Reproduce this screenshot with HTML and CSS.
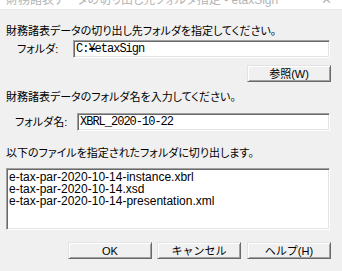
FILE: index.html
```html
<!DOCTYPE html>
<html lang="ja">
<head>
	<meta charset="UTF-8">
	<title>財務諸表データの切り出し</title>
	<link rel="stylesheet" href="styles.css">
</head>
<body>
	<div class="titlebar">
		<span class="title">財務諸表データの切り出し先フォルダ指定 - etaxSign</span>
		<span class="close">✕</span>
	</div>
	<div class="dialog">
		<p class="msg msg1">財務諸表データの切り出し先フォルダを指定してください。</p>
		<div class="row row1">
			<label class="lbl lbl1">フォルダ:</label>
			<div class="edit">C:¥etaxSign</div>
		</div>
		<div class="browse">
			<button class="btn">参照(W)</button>
		</div>
		<p class="msg msg2">財務諸表データのフォルダ名を入力してください。</p>
		<div class="row row2">
			<label class="lbl lbl2">フォルダ名:</label>
			<div class="edit">XBRL_2020-10-22</div>
		</div>
		<p class="msg msg3">以下のファイルを指定されたフォルダに切り出します。</p>
		<ul class="list">
			<li>e-tax-par-2020-10-14-instance.xbrl</li>
			<li>e-tax-par-2020-10-14.xsd</li>
			<li>e-tax-par-2020-10-14-presentation.xml</li>
		</ul>
		<div class="buttons">
			<button class="btn">OK</button>
			<button class="btn">キャンセル</button>
			<button class="btn btn-help">ヘルプ(H)</button>
		</div>
	</div>
</body>
</html>
```
FILE: styles.css
```css
* {
	margin: 0;
	padding: 0;
	list-style: none;
	box-sizing: border-box;
}
body {
	width: 342px;
	height: 271px;
	overflow: hidden;
	background: #f0f0f0;
	color: #000;
	font-family: "Liberation Sans", "Noto Sans CJK JP", sans-serif;
	font-size: 11px;
	font-feature-settings: "palt";
}
/* 上の切れたタイトルバー */
.titlebar {
	height: 10px;
	background: #fff;
	border-bottom: 1px solid #e6e6e6;
	overflow: hidden;
	display: flex;
	justify-content: space-between;
	color: #b4b4b4;
	font-size: 12px;
	line-height: 18px;
}
.title {
	margin-top: -9px;
	padding-left: 6px;
}
.close {
	margin-top: -9px;
	padding-right: 10px;
	font-size: 13px;
}
.dialog {
	padding: 0 12px 0 6px;
}
.msg {
	line-height: 14px;
	height: 14px;
	white-space: nowrap;
}
.msg1 {
	margin-top: 14px;
}
.msg2 {
	margin-top: 8px;
}
.msg3 {
	margin-top: 15px;
}
.row {
	display: flex;
	height: 18px;
}
.row1 {
	margin-top: 2px;
}
.row2 {
	margin-top: 9px;
}
.lbl {
	line-height: 18px;
	white-space: nowrap;
}
.lbl1 {
	width: 67px;
	padding-left: 11px;
}
.lbl2 {
	width: 71px;
	padding-left: 9px;
}
.edit, .list {
	background: #fff;
	border-top: 1px solid #a0a0a0;
	border-left: 1px solid #a0a0a0;
	border-right: 1px solid #fff;
	border-bottom: 1px solid #fff;
	box-shadow: inset 1px 1px #696969, inset -1px -1px #e3e3e3;
}
.edit {
	flex: 1;
	padding-left: 2px;
	font-family: "Liberation Mono", "Noto Sans CJK JP", monospace;
	font-size: 12px;
	letter-spacing: -1px;
	line-height: 17px;
}
.browse {
	display: flex;
	justify-content: flex-end;
	margin-top: 7px;
	margin-right: -1px;
}
.btn {
	width: 84px;
	height: 17px;
	background: #f0f0f0;
	font-family: inherit;
	font-size: 11px;
	color: #000;
	border-top: 1px solid #e3e3e3;
	border-left: 1px solid #e3e3e3;
	border-right: 1px solid #696969;
	border-bottom: 1px solid #696969;
	box-shadow: inset 1px 1px #fff, inset -1px -1px #a0a0a0;
	line-height: 14px;
}
.list {
	margin-top: 8px;
	height: 62px;
	padding: 2px 0 0 2px;
	font-size: 12px;
	line-height: 12px;
}
.buttons {
	display: flex;
	justify-content: flex-end;
	gap: 5px;
	margin-top: 12px;
	margin-right: -1px;
}
.btn-help {
	margin-left: 1px;
}
```
